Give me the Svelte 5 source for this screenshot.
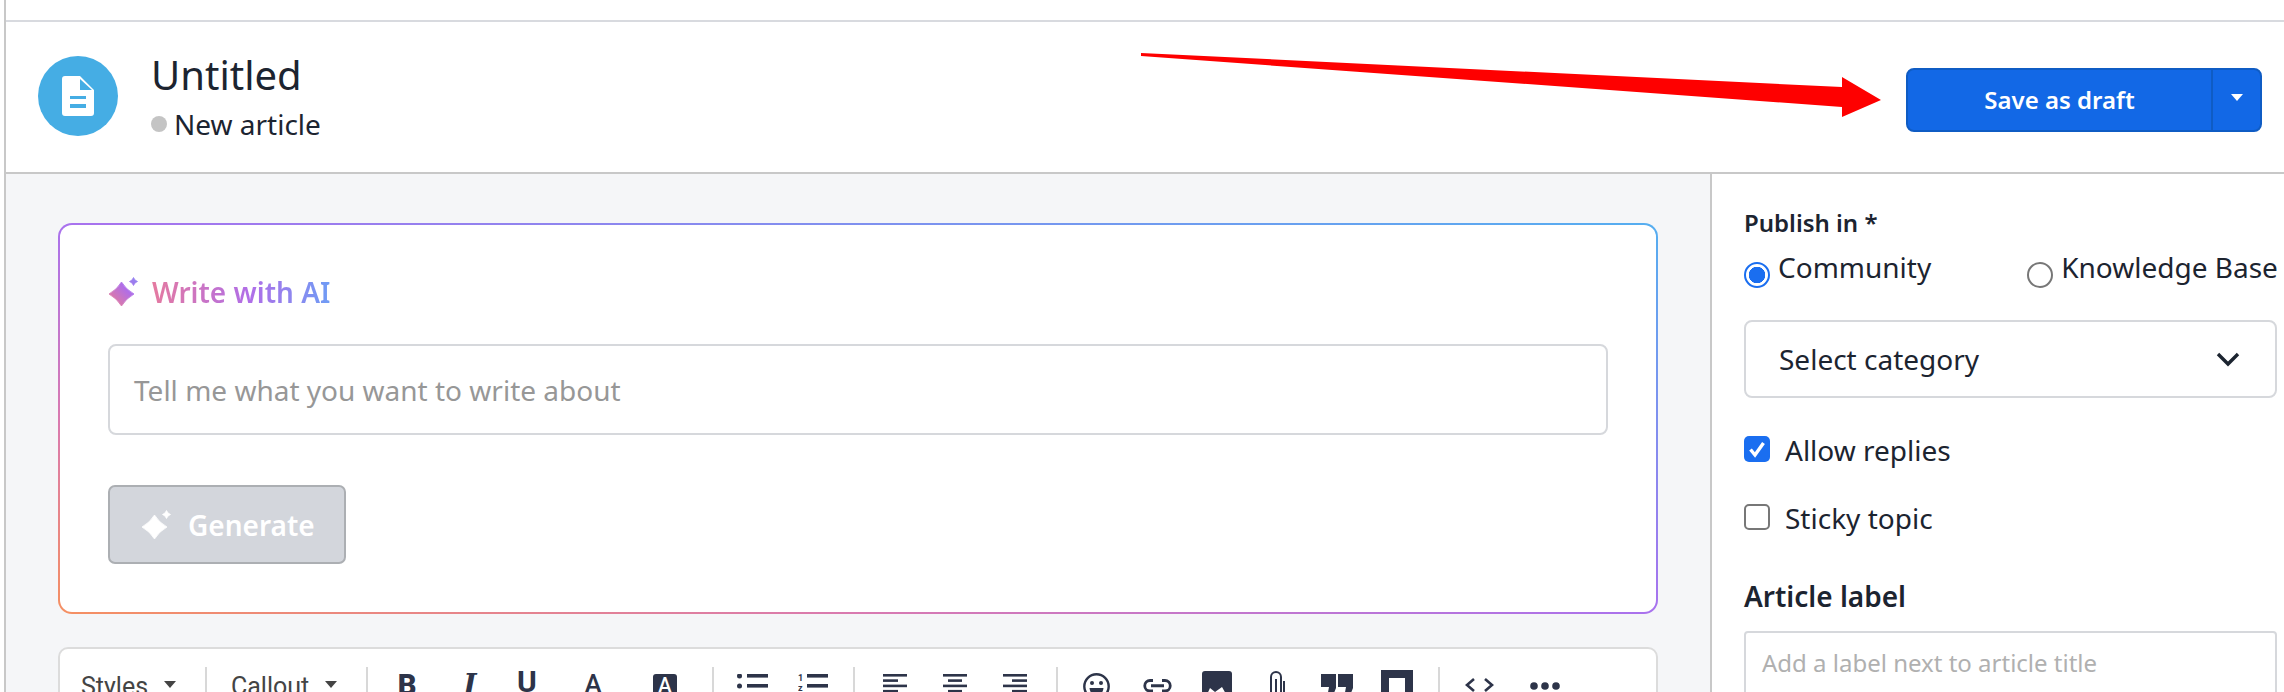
<script lang="ts">
  const alignLeft = [[0, 24], [0, 15], [0, 24], [0, 15]]
  const alignCenter = [[0, 24], [5, 14], [0, 24], [5, 14]]
  const alignRight = [[0, 24], [9, 15], [0, 24], [9, 15]]
</script>

{#snippet sparkle(color)}
  <svg class="sparkle" viewBox="0 0 30 30" aria-hidden="true">
    <path fill={color} stroke={color} stroke-width="0.8" stroke-linejoin="round" d="M13.5 5 Q18 12.5 26 17 Q18 21.5 13.5 29 Q9 21.5 1 17 Q9 12.5 13.5 5 Z M25.5 0.5 Q26.5 3.5 29.5 4.5 Q26.5 5.5 25.5 8.5 Q24.5 5.5 21.5 4.5 Q24.5 3.5 25.5 0.5 Z" />
  </svg>
{/snippet}

{#snippet alignIcon(rows, cls)}
  <svg class="align {cls}" viewBox="0 0 24 20" aria-hidden="true">
    {#each rows as row, i}
      <rect x={row[0]} y={i * 5.3} width={row[1]} height="2.6" />
    {/each}
  </svg>
{/snippet}

<div class="page">
  <div class="topbar"></div>

  <header class="head">
    <div class="head-left">
      <div class="doc-badge">
        <svg viewBox="0 0 32 40" aria-hidden="true">
          <path fill="#fff" fill-rule="evenodd" d="M3 0 H18 L32 14 V37 a3 3 0 0 1 -3 3 H3 a3 3 0 0 1 -3 -3 V3 a3 3 0 0 1 3 -3 Z M18 3 V14 H30 Z M8 20 V23 H24 V20 Z M8 28 V32 H24 V28 Z" />
        </svg>
      </div>
      <div class="head-text">
        <div class="title">Untitled</div>
        <div class="status"><span class="dot"></span>New article</div>
      </div>
    </div>

    <div class="save">
      <button class="save-main">Save as draft</button>
      <button class="save-caret" aria-label="More save options"><span></span></button>
    </div>

    <svg class="arrow" viewBox="0 0 760 70" aria-hidden="true">
      <polygon fill="#fe0000" points="0,0 701,34 701,24 740,47 701,64 701,54 0,3" />
    </svg>
  </header>

  <div class="body">
    <main class="main">
      <section class="ai-card">
        <div class="ai-inner">
          <div class="ai-title">
            <svg width="0" height="0" class="defs" aria-hidden="true">
              <defs>
                <linearGradient id="ai-grad" x1="0" y1="1" x2="1" y2="0">
                  <stop offset="0" stop-color="#ee7e8e" />
                  <stop offset="0.6" stop-color="#b06ee8" />
                  <stop offset="1" stop-color="#8f86f2" />
                </linearGradient>
              </defs>
            </svg>
            {@render sparkle('url(#ai-grad)')}
            <span class="ai-label">Write with AI</span>
          </div>
          <div class="ai-input">Tell me what you want to write about</div>
          <button class="generate">
            {@render sparkle('#fff')}
            <span>Generate</span>
          </button>
        </div>
      </section>

      <div class="toolbar">
        <span class="tool-text styles">Styles<i class="caret"></i></span>
        <span class="sep"></span>
        <span class="tool-text callout">Callout<i class="caret"></i></span>
        <span class="sep"></span>
        <span class="glyph bold">B</span>
        <span class="glyph italic">I</span>
        <span class="glyph under">U</span>
        <span class="glyph color">A</span>
        <span class="glyph boxed">A</span>
        <span class="sep s3"></span>
        <svg class="list bullets" viewBox="0 0 31 20" aria-hidden="true">
          <circle cx="2.5" cy="2" r="2.5" /><rect x="10" y="0" width="21" height="3.6" />
          <circle cx="2.5" cy="12" r="2.5" /><rect x="10" y="10" width="21" height="3.6" />
        </svg>
        <svg class="list num" viewBox="0 0 30 20" aria-hidden="true">
          <text x="0" y="6.5" font-size="9" font-weight="700" font-family="Roboto">1</text>
          <rect x="9" y="0" width="21" height="3.6" />
          <text x="0" y="16.5" font-size="9" font-weight="700" font-family="Roboto">z</text>
          <rect x="9" y="10" width="21" height="3.6" />
        </svg>
        <span class="sep s4"></span>
        {@render alignIcon(alignLeft, 'a1')}
        {@render alignIcon(alignCenter, 'a2')}
        {@render alignIcon(alignRight, 'a2')}
        <span class="sep s5"></span>
        <svg class="smile" viewBox="0 0 27 27" aria-hidden="true">
          <circle cx="13.5" cy="13.5" r="12.2" fill="none" stroke="#2d3449" stroke-width="2.4" />
          <circle cx="9" cy="10" r="2" /><circle cx="18" cy="10" r="2" />
          <path d="M6.5 15 H20.5 C20 20 17 22.5 13.5 22.5 C10 22.5 7 20 6.5 15 Z" />
        </svg>
        <svg class="link" viewBox="0 0 29 13.5" aria-hidden="true">
          <path fill="none" stroke="#2d3449" stroke-width="2.8" d="M10 1.5 H7 a5.25 5.25 0 0 0 0 10.5 H10 M19 1.5 H22 a5.25 5.25 0 0 1 0 10.5 H19 M8 6.75 H21" />
        </svg>
        <svg class="image" viewBox="0 0 30 30" aria-hidden="true">
          <path d="M3 0 H27 a3 3 0 0 1 3 3 V30 H0 V3 a3 3 0 0 1 3 -3 Z" />
          <path fill="#fff" d="M2 30 L8 17 L13 21 L20 16 L28 30 Z" />
        </svg>
        <svg class="clip" viewBox="0 0 16 30" aria-hidden="true">
          <path fill="none" stroke="#2d3449" stroke-width="2" d="M2 30 V7 a5 5 0 0 1 10 0 V30 M7 9 V30 M15 11 V30" />
        </svg>
        <svg class="quote" viewBox="0 0 32 24" aria-hidden="true">
          <path d="M0 0 H15 V14 L11 24 H6 L8 13 H0 Z M17 0 H32 V14 L28 24 H23 L25 13 H17 Z" />
        </svg>
        <svg class="embed" viewBox="0 0 32 32" aria-hidden="true">
          <path fill-rule="evenodd" d="M0 0 H32 V32 H0 Z M8 8 V32 H24 V8 Z" />
        </svg>
        <span class="sep s6"></span>
        <svg class="code" viewBox="0 0 29 14" aria-hidden="true">
          <path fill="none" stroke="#2d3449" stroke-width="2.6" d="M9 1 L2 7 L9 13 M20 1 L27 7 L20 13" />
        </svg>
        <svg class="more" viewBox="0 0 30 8" aria-hidden="true">
          <circle cx="4" cy="4" r="3.8" /><circle cx="15" cy="4" r="3.8" /><circle cx="26" cy="4" r="3.8" />
        </svg>
      </div>
    </main>

    <aside class="side">
      <div class="publish-label">Publish in *</div>
      <div class="radios">
        <label class="radio"><span class="radio-dot on"></span>Community</label>
        <label class="radio"><span class="radio-dot"></span>Knowledge Base</label>
      </div>
      <div class="select">
        <span>Select category</span>
        <svg viewBox="0 0 24 16" aria-hidden="true">
          <path fill="none" stroke="#1c2430" stroke-width="3.4" d="M2 3 L12 13 L22 3" />
        </svg>
      </div>
      <div class="check first">
        <span class="box on">
          <svg viewBox="0 0 26 26" aria-hidden="true">
            <path fill="none" stroke="#fff" stroke-width="3.4" d="M6.5 13.5 L11 19 L19.5 7" />
          </svg>
        </span>
        <span class="check-label">Allow replies</span>
      </div>
      <div class="check second"><span class="box"></span><span class="check-label">Sticky topic</span></div>
      <div class="article-label">Article label</div>
      <div class="label-input">Add a label next to article title</div>
    </aside>
  </div>
</div>

<style>
  :global(body) {
    margin: 0;
    background: #fff;
    font-family: 'Noto Sans', 'Open Sans', sans-serif;
    color: #1c2430;
  }

  .page {
    width: 2280px;
    height: 692px;
    box-sizing: border-box;
    border-left: 2px solid #c8c8c8;
    margin-left: 4px;
    overflow: hidden;
    background: #fff;
  }

  .topbar {
    height: 20px;
    border-bottom: 2px solid #d8dadf;
  }

  .head {
    position: relative;
    height: 152px;
    box-sizing: border-box;
    border-bottom: 2px solid #c8c8c8;
    display: flex;
    align-items: center;
    justify-content: space-between;
    padding: 0 22px 0 32px;
  }

  .head-left {
    display: flex;
    align-items: center;
    gap: 33px;
    margin-top: -2px;
  }

  .doc-badge {
    width: 80px;
    height: 80px;
    border-radius: 50%;
    background: #45ade4;
    display: flex;
    align-items: center;
    justify-content: center;
  }

  .doc-badge svg {
    width: 32px;
    height: 40px;
  }

  .title {
    font-size: 40px;
    line-height: 50px;
  }

  .status {
    display: flex;
    align-items: center;
    gap: 7px;
    margin-top: 6px;
    font-size: 28px;
    line-height: 36px;
  }

  .dot {
    width: 16px;
    height: 16px;
    border-radius: 50%;
    background: #c4c4c4;
  }

  .save {
    display: flex;
    width: 356px;
    height: 64px;
    margin-top: 6px;
  }

  .save button {
    border: 2px solid #0f5cc4;
    background: #1268e6;
    color: #fff;
    font: 600 24px 'Noto Sans', sans-serif;
    padding: 0;
  }

  .save-main {
    flex: 1;
    border-radius: 8px 0 0 8px;
    border-right-width: 1px !important;
    padding-bottom: 2px !important;
  }

  .save-caret {
    width: 50px;
    border-radius: 0 8px 8px 0;
    border-left-width: 1px !important;
    display: flex;
    justify-content: center;
    padding-top: 24px !important;
  }

  .save-caret span {
    width: 0;
    height: 0;
    border-left: 6.5px solid transparent;
    border-right: 6.5px solid transparent;
    border-top: 7px solid #fff;
  }

  .arrow {
    position: absolute;
    left: 1135px;
    top: 31px;
    width: 760px;
    height: 70px;
  }

  .body {
    display: flex;
    height: 518px;
  }

  .main {
    width: 1706px;
    box-sizing: border-box;
    background: #f5f6f8;
    padding: 49px 52px 0;
    border-right: 2px solid #c8c8c8;
    flex: none;
  }

  .ai-card {
    height: 391px;
    box-sizing: border-box;
    padding: 2px;
    border-radius: 14px;
    background: linear-gradient(to top right, #f59062 0%, #d97ab0 25%, #a972ee 50%, #55aef0 100%);
  }

  .ai-inner {
    height: 100%;
    box-sizing: border-box;
    background: #fff;
    border-radius: 12px;
    padding: 50px 48px 0;
  }

  .ai-title {
    display: flex;
    align-items: center;
    gap: 14px;
    height: 34px;
  }

  .defs {
    position: absolute;
  }

  .sparkle {
    width: 30px;
    height: 30px;
    flex: none;
  }

  .ai-label {
    font-weight: 600;
    font-size: 28px;
    background: linear-gradient(to right, #e57aa0, #b06ee8 55%, #6f9cf5);
    background-clip: text;
    -webkit-background-clip: text;
    color: transparent;
  }

  .ai-input {
    margin-top: 35px;
    height: 91px;
    box-sizing: border-box;
    border: 2px solid #d6d8dc;
    border-radius: 8px;
    padding-left: 24px;
    display: flex;
    align-items: center;
    font-size: 28px;
    color: #979797;
  }

  .generate {
    margin-top: 50px;
    width: 238px;
    height: 79px;
    box-sizing: border-box;
    border: 2px solid #acafb3;
    border-radius: 7px;
    background: #d3d6dc;
    color: #fff;
    display: flex;
    align-items: center;
    gap: 17px;
    padding: 0 0 0 31px;
    font: 600 28px 'Noto Sans', sans-serif;
  }

  .toolbar {
    margin-top: 33px;
    height: 80px;
    box-sizing: border-box;
    border: 2px solid #dcdcdc;
    border-radius: 10px;
    background: #fff;
    display: flex;
    align-items: flex-start;
    padding-top: 18px;
    fill: #2d3449;
  }

  .tool-text {
    display: flex;
    align-items: center;
    font: 25px/32px Roboto, sans-serif;
    color: #444;
    padding-top: 4px;
    flex: none;
  }

  .styles {
    margin-left: 21px;
    width: 124px;
  }

  .callout {
    margin-left: 24px;
    width: 135px;
  }

  .caret {
    width: 0;
    height: 0;
    margin: 0 0 6px 16px;
    border-left: 6px solid transparent;
    border-right: 6px solid transparent;
    border-top: 7px solid #444;
  }

  .sep {
    width: 2px;
    height: 40px;
    background: #d8d8d8;
    flex: none;
  }

  .s3 {
    margin-left: 35px;
  }

  .s4 {
    margin-left: 25px;
  }

  .s5 {
    margin-left: 29px;
  }

  .s6 {
    margin-left: 25px;
  }

  .glyph {
    flex: none;
    color: #2d3449;
    line-height: 32px;
    font-family: Roboto, sans-serif;
    text-align: center;
  }

  .bold {
    margin: 2px 0 0 29px;
    font-weight: 900;
    font-size: 29px;
    width: 20px;
  }

  .italic {
    margin: 2px 0 0 43px;
    font-family: 'DejaVu Serif', serif;
    font-style: italic;
    font-weight: 700;
    font-size: 28px;
    width: 20px;
  }

  .under {
    margin: -1px 0 0 37px;
    font-weight: 700;
    font-size: 30px;
    width: 20px;
  }

  .color {
    margin: 1px 0 0 47px;
    font-weight: 500;
    font-size: 26px;
    width: 18px;
  }

  .boxed {
    margin: 7px 0 0 51px;
    font-size: 20px;
    line-height: 23px;
    font-weight: 500;
    width: 24px;
    height: 32px;
    background: #2d3449;
    color: #fff;
    border-radius: 3px;
  }

  .list {
    height: 20px;
    flex: none;
    margin-top: 7px;
  }

  .bullets {
    width: 31px;
    margin-left: 23px;
  }

  .num {
    width: 30px;
    margin-left: 30px;
  }

  .align {
    width: 24px;
    height: 20px;
    flex: none;
    margin-top: 7px;
  }

  .a1 {
    margin-left: 28px;
  }

  .a2 {
    margin-left: 36px;
  }

  .smile {
    width: 27px;
    height: 27px;
    flex: none;
    margin: 6px 0 0 25px;
  }

  .link {
    width: 29px;
    height: 13.5px;
    flex: none;
    margin: 12px 0 0 33px;
  }

  .image {
    width: 30px;
    height: 30px;
    flex: none;
    margin: 4px 0 0 30px;
  }

  .clip {
    width: 16px;
    height: 30px;
    flex: none;
    margin: 3px 0 0 37px;
  }

  .quote {
    width: 32px;
    height: 24px;
    flex: none;
    margin: 7px 0 0 36px;
  }

  .embed {
    width: 32px;
    height: 32px;
    flex: none;
    margin: 3px 0 0 28px;
  }

  .code {
    width: 29px;
    height: 14px;
    flex: none;
    margin: 11px 0 0 25px;
  }

  .more {
    width: 30px;
    height: 8px;
    flex: none;
    margin: 15px 0 0 36px;
  }

  .side {
    flex: 1;
    min-width: 0;
    padding: 35px 7px 0 32px;
    background: #fff;
  }

  .publish-label {
    font-weight: 600;
    font-size: 24px;
    line-height: 28px;
  }

  .radios {
    display: flex;
    margin-top: 13px;
    font-size: 28px;
    line-height: 34px;
    white-space: nowrap;
  }

  .radio {
    display: flex;
    align-items: flex-start;
    gap: 8px;
  }

  .radio:last-child {
    margin-left: 96px;
  }

  .radio-dot {
    width: 26px;
    height: 26px;
    box-sizing: border-box;
    border-radius: 50%;
    border: 2px solid #777;
    margin-top: 12px;
    flex: none;
  }

  .radio-dot.on {
    border-color: #1a6ef0;
    background: radial-gradient(circle, #1a6ef0 0 8px, #fff 8.5px);
  }

  .select {
    margin-top: 32px;
    height: 78px;
    box-sizing: border-box;
    border: 2px solid #d6d8dc;
    border-radius: 8px;
    display: flex;
    align-items: center;
    justify-content: space-between;
    padding: 0 35px 0 33px;
    font-size: 28px;
  }

  .select svg {
    width: 24px;
    height: 16px;
  }

  .check {
    display: flex;
    align-items: center;
    gap: 15px;
    font-size: 28px;
    line-height: 34px;
  }

  .check-label {
    margin-top: 2px;
  }

  .first {
    margin-top: 33px;
  }

  .second {
    margin-top: 32px;
  }

  .box {
    width: 26px;
    height: 26px;
    box-sizing: border-box;
    border: 2px solid #777;
    border-radius: 5px;
    flex: none;
  }

  .box.on {
    border: none;
    background: #1a6ef0;
  }

  .box svg {
    display: block;
  }

  .article-label {
    margin-top: 43px;
    font-weight: 600;
    font-size: 28px;
    line-height: 36px;
  }

  .label-input {
    margin-top: 17px;
    height: 80px;
    box-sizing: border-box;
    border: 2px solid #d6d8dc;
    border-radius: 4px;
    padding: 13px 16px;
    font-size: 24px;
    line-height: 34px;
    color: #b0b0b0;
  }
</style>
